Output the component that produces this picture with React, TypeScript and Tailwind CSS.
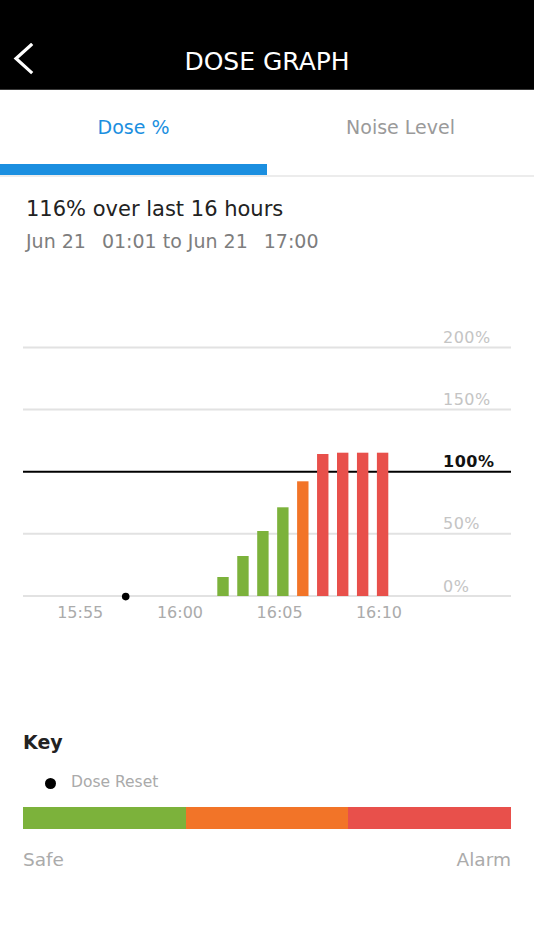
// bar tops in screen y, measured against the 0% baseline at 597
const BARS = [
    { top: 578, color: '#7cb23b' },
    { top: 557, color: '#7cb23b' },
    { top: 532, color: '#7cb23b' },
    { top: 508.3, color: '#7cb23b' },
    { top: 482.3, color: '#f27428' },
    { top: 455, color: '#e8504b' },
    { top: 453.7, color: '#e8504b' },
    { top: 453.7, color: '#e8504b' },
    { top: 453.7, color: '#e8504b' },
]

const GRID = [
    { y: 28.4, label: '200%', base: 24 },
    { y: 90.5, label: '150%', base: 85.7 },
    { y: 152.7, label: '100%', base: 147.7, strong: true },
    { y: 214.8, label: '50%', base: 210 },
    { y: 277, label: '0%', base: 272.7 },
]

const TIMES = [
    { x: 80.2, label: '15:55' },
    { x: 180, label: '16:00' },
    { x: 279.6, label: '16:05' },
    { x: 379, label: '16:10' },
]

function BackIcon() {
    return (
        <svg width="22" height="32" viewBox="0 0 22 32" className="block">
            <polyline
                points="18,2 3,15.5 18,29"
                fill="none"
                stroke="#fff"
                strokeWidth="3.2"
                strokeLinecap="square"
            />
        </svg>
    )
}

function DoseChart() {
    // svg space starts at page y = 320
    const offset = 320
    const baseline = 277

    return (
        <svg width="534" height="310" viewBox="0 0 534 310" className="block">
            {GRID.map(g => (
                <line
                    key={g.label}
                    x1="23"
                    x2="511"
                    y1={g.y}
                    y2={g.y}
                    stroke={g.strong ? '#000' : '#e2e2e2'}
                    strokeWidth="2"
                />
            ))}

            {BARS.map((b, i) => (
                <rect
                    key={i}
                    x={217.3 + i * 19.95}
                    y={b.top - offset}
                    width="11.4"
                    height={baseline - (b.top - offset)}
                    fill={b.color}
                />
            ))}

            <circle cx="125.7" cy="277.6" r="3.8" fill="#000" />

            {GRID.map(g => (
                <text
                    key={g.label + 't'}
                    x="443"
                    y={g.base}
                    fontSize="16"
                    letterSpacing="0.5"
                    fill={g.strong ? '#111' : '#c4c4c4'}
                    fontWeight={g.strong ? 700 : 400}
                >
                    {g.label}
                </text>
            ))}

            {TIMES.map(t => (
                <text
                    key={t.label}
                    x={t.x}
                    y="299"
                    fontSize="16"
                    textAnchor="middle"
                    fill="#ababab"
                >
                    {t.label}
                </text>
            ))}
        </svg>
    )
}

export default function App() {
    return (
        <div className="w-[534px] h-[950px] bg-white font-['DejaVu_Sans',sans-serif] overflow-hidden">
            {/* Header */}
            <div className="h-[90px] bg-black grid grid-cols-[60px_1fr_60px] items-start pt-[43px] border-b border-[#3a3a3a]">
                <div className="pl-[13px]">
                    <BackIcon />
                </div>
                <div className="text-white text-[25px] leading-[30px] text-center mt-[4px]">
                    DOSE GRAPH
                </div>
                <div />
            </div>

            {/* Tabs */}
            <div className="flex h-[74px]">
                <div className="flex-1 flex items-center justify-center text-[19px] text-[#1b8fe0]">
                    Dose %
                </div>
                <div className="flex-1 flex items-center justify-center text-[19px] text-[#9a9a9a]">
                    Noise Level
                </div>
            </div>
            <div className="flex h-[11px]">
                <div className="w-1/2 bg-[#1b8fe0]" />
            </div>
            <div className="h-[2px] bg-[#ececec]" />

            {/* Summary */}
            <div className="pl-[26px] pt-[19px]">
                <div className="text-[21px] leading-[26px] text-[#222]">
                    116% over last 16 hours
                </div>
                <div className="mt-[7px] text-[19px] leading-[24px] text-[#7d7d7d] whitespace-nowrap">
                    Jun 21<span className="inline-block w-[16px]" />01:01 to Jun 21<span className="inline-block w-[16px]" />17:00
                </div>
            </div>

            <div className="mt-[66px]">
                <DoseChart />
            </div>

            {/* Key */}
            <div className="mt-[101px] px-[23px]">
                <div className="text-[19px] leading-[24px] font-bold text-[#222]">Key</div>
                <div className="mt-[19px] h-[20px] flex items-center pl-[22px]">
                    <span className="block shrink-0 w-[11px] h-[11px] rounded-full bg-black" />
                    <span className="ml-[15px] text-[15.5px] text-[#aaaaaa]">Dose Reset</span>
                </div>
                <div className="mt-[14px] h-[22px] flex">
                    <div className="flex-1 bg-[#7cb23b]" />
                    <div className="flex-1 bg-[#f27428]" />
                    <div className="flex-1 bg-[#e8504b]" />
                </div>
                <div className="mt-[19px] flex justify-between text-[18.5px] leading-[24px] text-[#ababab]">
                    <span>Safe</span>
                    <span>Alarm</span>
                </div>
            </div>
        </div>
    )
}
